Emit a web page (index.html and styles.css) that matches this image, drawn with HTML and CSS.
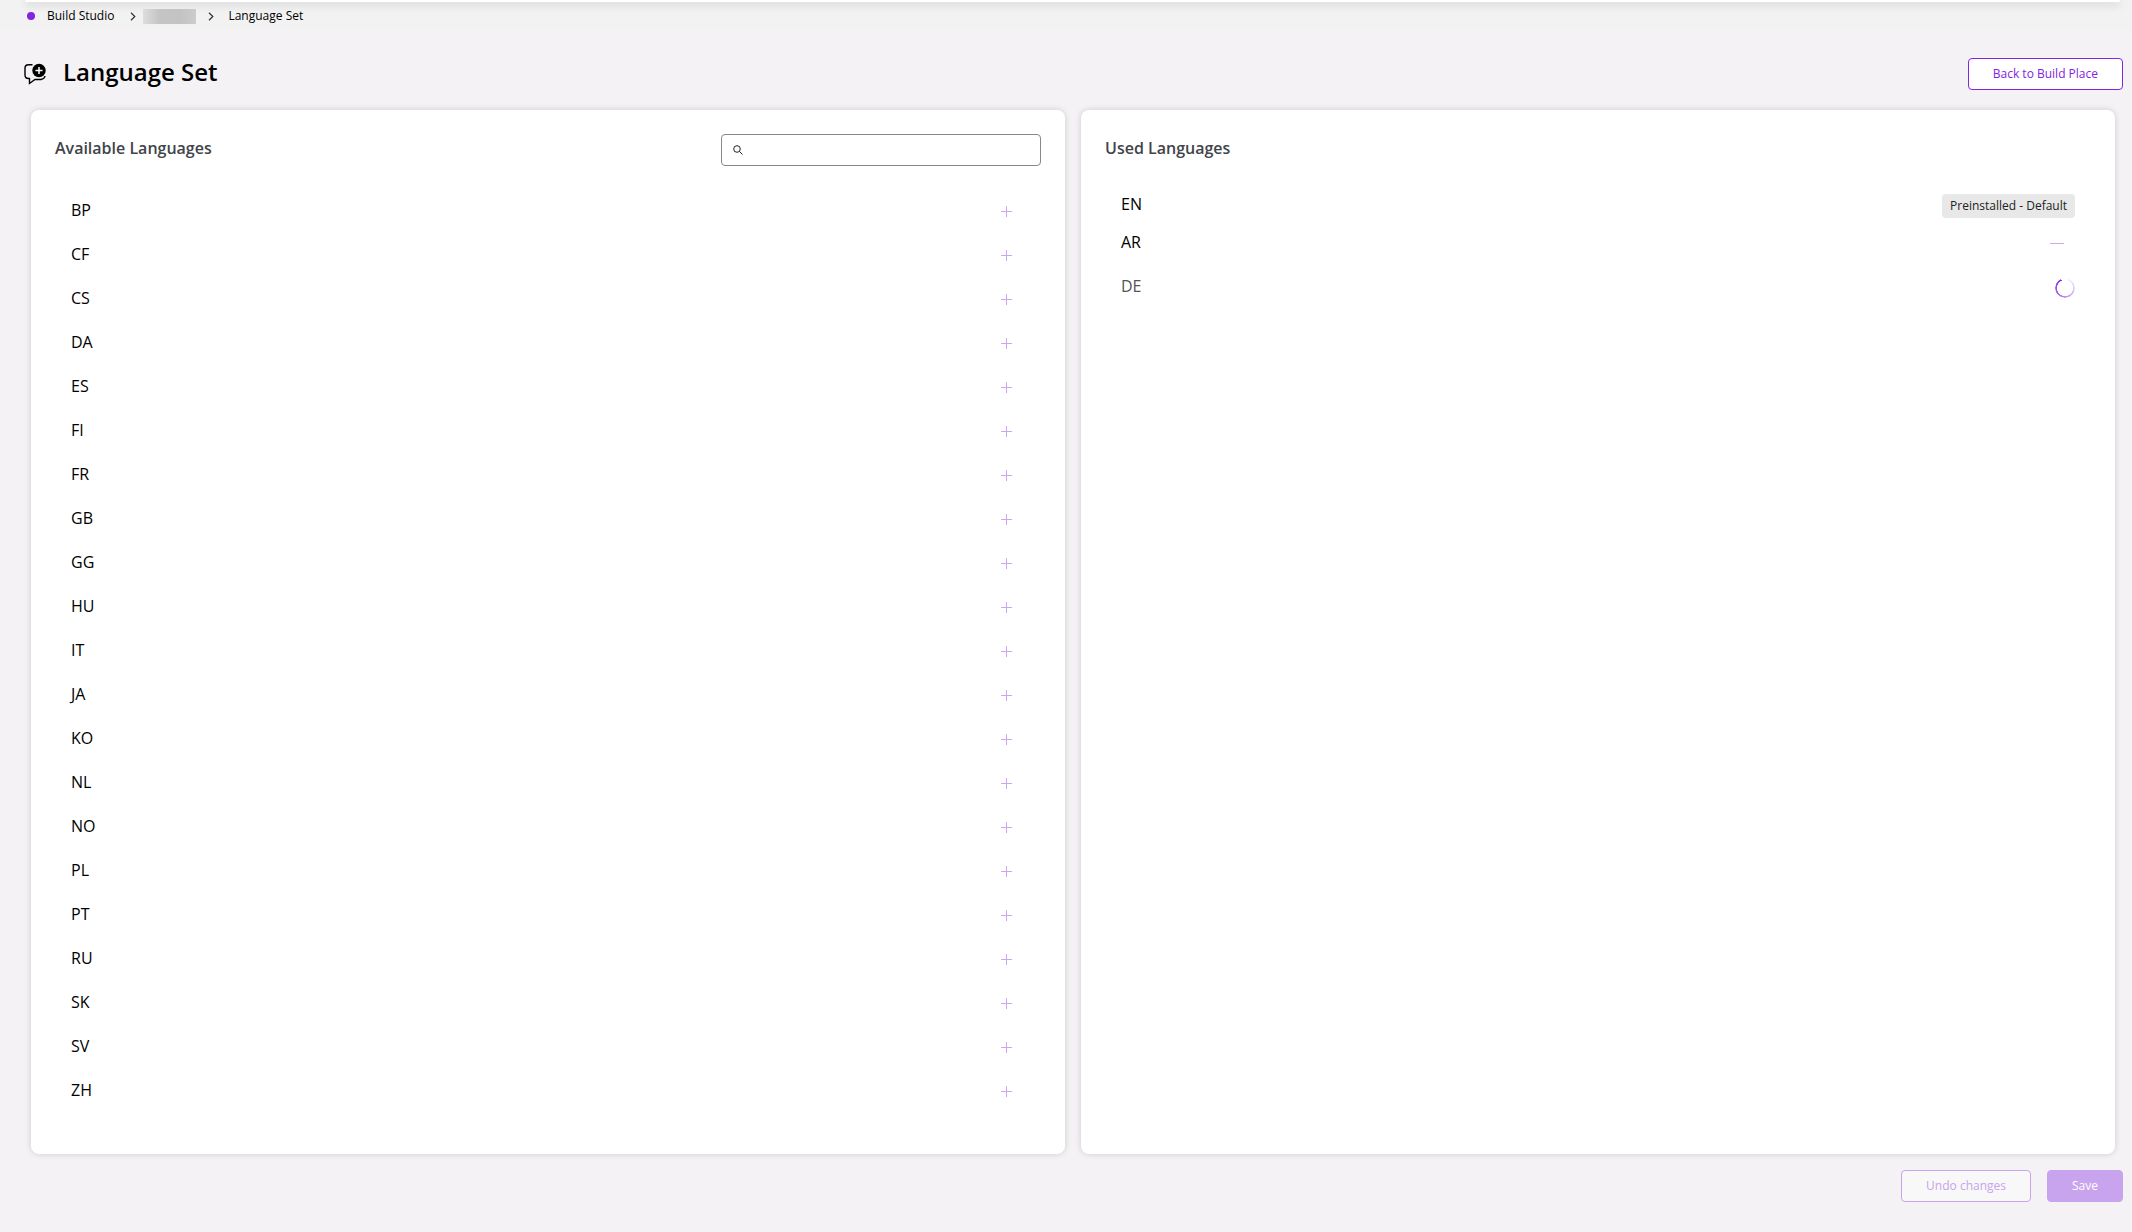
FILE: index.html
```html
<!DOCTYPE html>
<html lang="en">
<head>
<meta charset="utf-8">
<meta name="viewport" content="width=device-width, initial-scale=1">
<title>Language Set</title>
<link rel="stylesheet" href="styles.css">
</head>
<body>
<svg class="sprite" aria-hidden="true">
  <symbol id="plus" viewBox="0 0 11 11"><path d="M0 5.5h11M5.5 0v11" stroke="currentColor" fill="none"/></symbol>
  <symbol id="chevron" viewBox="0 0 6 9"><path d="M1 .8l3.8 3.7L1 8.2" stroke="currentColor" stroke-width="1.2" fill="none"/></symbol>
</svg>
<div class="topbar">
  <div class="topbar-panel"></div>
  <nav class="breadcrumb" aria-label="Breadcrumb">
    <span class="dot"></span>
    <a href="#">Build Studio</a>
    <svg class="chevron"><use href="#chevron"/></svg>
    <a href="#" class="redacted" aria-label="Project"></a>
    <svg class="chevron"><use href="#chevron"/></svg>
    <span class="current">Language Set</span>
  </nav>
</div>
<main class="page">
  <header class="page-header">
    <svg class="title-icon" viewBox="1 0 24 24" aria-hidden="true">
      <path d="M9.500 2.700H5.500Q2 2.700 2 6V13Q2 16.500 5.500 16.500H6.500V21.500L12 17.500H18Q21.500 17 22 14" fill="none" stroke="#000" stroke-width="1.400"/>
      <circle cx="16" cy="8.500" r="6.700"/>
      <path d="M16 5v7M12.500 8.500h7" stroke="#fff" stroke-width="1.500"/>
    </svg>
    <h1>Language Set</h1>
    <button type="button" class="btn outline">Back to Build Place</button>
  </header>
  <div class="cards">
    <section class="card">
      <div class="card-head">
        <h2>Available Languages</h2>
        <label class="search">
          <svg viewBox="0 0 10 10" aria-hidden="true"><circle cx="4" cy="4" r="3.300"/><path d="M6.400 6.400L9.500 9.500"/></svg>
          <input type="search" aria-label="Search languages">
        </label>
      </div>
      <ul class="list">
        <li><span>BP</span><button type="button" class="icon-btn" aria-label="Add BP"><svg><use href="#plus"/></svg></button></li>
        <li><span>CF</span><button type="button" class="icon-btn" aria-label="Add CF"><svg><use href="#plus"/></svg></button></li>
        <li><span>CS</span><button type="button" class="icon-btn" aria-label="Add CS"><svg><use href="#plus"/></svg></button></li>
        <li><span>DA</span><button type="button" class="icon-btn" aria-label="Add DA"><svg><use href="#plus"/></svg></button></li>
        <li><span>ES</span><button type="button" class="icon-btn" aria-label="Add ES"><svg><use href="#plus"/></svg></button></li>
        <li><span>FI</span><button type="button" class="icon-btn" aria-label="Add FI"><svg><use href="#plus"/></svg></button></li>
        <li><span>FR</span><button type="button" class="icon-btn" aria-label="Add FR"><svg><use href="#plus"/></svg></button></li>
        <li><span>GB</span><button type="button" class="icon-btn" aria-label="Add GB"><svg><use href="#plus"/></svg></button></li>
        <li><span>GG</span><button type="button" class="icon-btn" aria-label="Add GG"><svg><use href="#plus"/></svg></button></li>
        <li><span>HU</span><button type="button" class="icon-btn" aria-label="Add HU"><svg><use href="#plus"/></svg></button></li>
        <li><span>IT</span><button type="button" class="icon-btn" aria-label="Add IT"><svg><use href="#plus"/></svg></button></li>
        <li><span>JA</span><button type="button" class="icon-btn" aria-label="Add JA"><svg><use href="#plus"/></svg></button></li>
        <li><span>KO</span><button type="button" class="icon-btn" aria-label="Add KO"><svg><use href="#plus"/></svg></button></li>
        <li><span>NL</span><button type="button" class="icon-btn" aria-label="Add NL"><svg><use href="#plus"/></svg></button></li>
        <li><span>NO</span><button type="button" class="icon-btn" aria-label="Add NO"><svg><use href="#plus"/></svg></button></li>
        <li><span>PL</span><button type="button" class="icon-btn" aria-label="Add PL"><svg><use href="#plus"/></svg></button></li>
        <li><span>PT</span><button type="button" class="icon-btn" aria-label="Add PT"><svg><use href="#plus"/></svg></button></li>
        <li><span>RU</span><button type="button" class="icon-btn" aria-label="Add RU"><svg><use href="#plus"/></svg></button></li>
        <li><span>SK</span><button type="button" class="icon-btn" aria-label="Add SK"><svg><use href="#plus"/></svg></button></li>
        <li><span>SV</span><button type="button" class="icon-btn" aria-label="Add SV"><svg><use href="#plus"/></svg></button></li>
        <li><span>ZH</span><button type="button" class="icon-btn" aria-label="Add ZH"><svg><use href="#plus"/></svg></button></li>
      </ul>
    </section>
    <section class="card">
      <div class="card-head"><h2>Used Languages</h2></div>
      <ul class="list used">
        <li class="default"><span>EN</span><span class="badge">Preinstalled - Default</span></li>
        <li><span>AR</span><button type="button" class="icon-btn" aria-label="Remove AR"><svg class="minus" viewBox="0 0 14 1"><path d="M0 .5h14" stroke="currentColor"/></svg></button></li>
        <li class="pending"><span>DE</span><span class="spinner" role="status" aria-label="Installing"></span></li>
      </ul>
    </section>
  </div>
  <footer class="actions">
    <button type="button" class="btn outline" disabled>Undo changes</button>
    <button type="button" class="btn primary" disabled>Save</button>
  </footer>
</main>
</body>
</html>
```
FILE: styles.css
```css
* { box-sizing: border-box; }
body { margin: 0; background: #f4f2f5; color: #000; font: 16px/24px "Open Sans", sans-serif; }
h1, h2, ul { margin: 0; padding: 0; }
.sprite { display: none; }
.topbar { height: 30px; padding: 0 12px 0 25px; background: #f2f2f2; overflow: hidden; }
.topbar-panel { height: 2px; background: #fff; border-radius: 0 0 6px 6px; box-shadow: 0 2px 8px rgba(0,0,0,.3); }
.breadcrumb { display: flex; align-items: center; height: 28px; padding-left: 2px; font-size: 12px; line-height: 18px; }
.breadcrumb a { color: inherit; text-decoration: none; }
.dot { width: 8px; height: 8px; margin-right: 12px; border-radius: 50%; background: #8224e3; }
.chevron { width: 6px; height: 9px; margin: 0 7px 0 16px; color: #333; }
.redacted { width: 53px; height: 15px; background: linear-gradient(90deg, #ddd, #c5c5c5 30%, #c3c3c3 70%, #ccc); }
.redacted + .chevron { margin-left: 12px; }
.current { margin-left: 7px; }
.page { padding: 28px 9px 28px 24px; }
.page-header { display: flex; align-items: flex-start; }
.title-icon { width: 24px; height: 24px; margin: 4px 15px 0 0; }
h1 { font-size: 24px; line-height: 28px; font-weight: 600; }
.btn { height: 32px; padding: 0 24px; border: 1px solid #8224e3; border-radius: 4px; font: 12px/18px "Open Sans", sans-serif; }
.outline { background: #fff; color: #8224e3; }
.page-header .btn { margin-left: auto; }
.cards { display: grid; grid-template-columns: 1fr 1fr; gap: 16px; padding: 20px 8px 16px 7px; }
.card { background: #fff; border-radius: 8px; box-shadow: 0 0 6px rgba(0,0,0,.16); padding: 24px 24px 42px; }
.card-head { display: flex; justify-content: space-between; height: 54px; }
h2 { font-size: 16px; line-height: 28px; font-weight: 600; color: #414449; }
.search { display: flex; align-items: center; width: 320px; height: 32px; padding: 0 11px; border: 1px solid #888; border-radius: 4px; }
.search svg { width: 10px; height: 10px; fill: none; stroke: #222; }
.search input { flex: 1; min-width: 0; border: 0; outline: 0; background: none; font: 12px/18px "Open Sans", sans-serif; }
.list { list-style: none; padding: 0 16px; }
.list li { display: flex; align-items: center; justify-content: space-between; height: 44px; }
.icon-btn { display: flex; align-items: center; justify-content: center; width: 37px; height: 27px; padding: 2px 0 0; border: 0; background: none; color: #cca6f2; }
.icon-btn svg { width: 11px; height: 11px; }
.icon-btn .minus { width: 14px; height: 1px; }
.list .default { height: 32px; }
.badge { margin-top: 4px; padding: 3px 8px; border-radius: 4px; background: #e8e8e8; color: #222; font-size: 12px; line-height: 18px; }
.pending { color: #555; }
.spinner { width: 20px; height: 20px; margin-top: 4px; border-radius: 50%; background: conic-gradient(from 20deg, #f6effd, #dcc0f7 25%, #b57cee 50%, #8224e3 88%, transparent 88%); mask: radial-gradient(closest-side, transparent 78%, #000 83%); }
.actions { display: flex; justify-content: flex-end; gap: 16px; }
.btn:disabled { border-color: #c8a3ee; }
.outline:disabled { background: #f8f8f8; color: #c8a3ee; }
.primary:disabled { background: #c8a3ee; color: #fff; }
```
